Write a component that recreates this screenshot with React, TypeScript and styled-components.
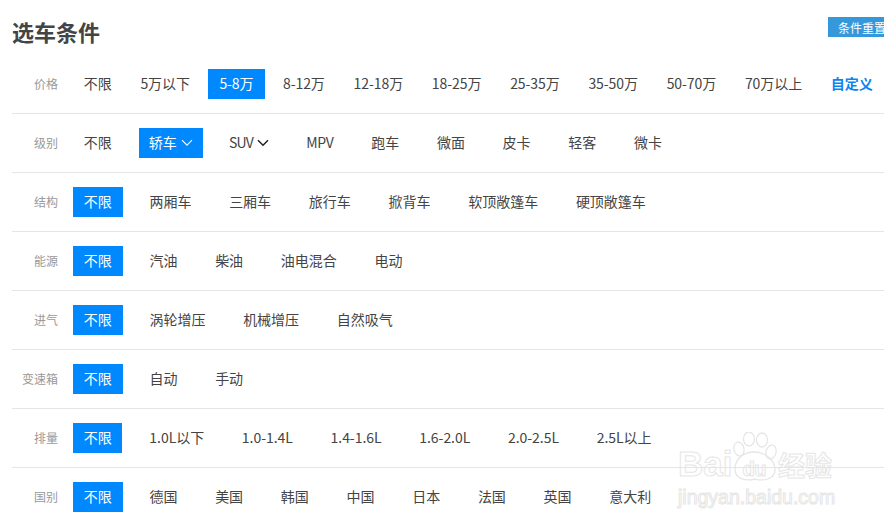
import React from "react";
import styled, { createGlobalStyle } from "styled-components";

const Global = createGlobalStyle`
  html, body { margin: 0; padding: 0; background: #fff; overflow: hidden; }
  body { font-family: "Noto Sans CJK SC", "Noto Sans", sans-serif; }
`;

const Page = styled.div`
  position: relative;
  width: 884px;
  height: 523px;
  overflow: hidden;
  padding-left: 12px;
  box-sizing: border-box;
`;

const Header = styled.header`
  display: flex;
  justify-content: space-between;
  align-items: flex-start;
  height: 55px;
  margin-right: -12px;
`;

const Title = styled.h1`
  margin: 15px 0 0;
  font-size: 22px;
  line-height: 32px;
  font-weight: 700;
  color: #444;
`;

const ResetButton = styled.button`
  margin: 17px 0 0;
  width: 68px;
  height: 20px;
  padding: 0;
  border: 0;
  background: #3498db;
  color: #fff;
  font: 12px/19px "Noto Sans CJK SC", sans-serif;
`;

const Row = styled.section<{ $last?: boolean }>`
  display: flex;
  align-items: center;
  height: 58px;
  border-bottom: ${(p) => (p.$last ? "0" : "1px solid #e5e5e5")};
`;

const Label = styled.span`
  flex: 0 0 46px;
  margin-right: 15px;
  text-align: right;
  font-size: 12px;
  line-height: 30px;
  color: #999;
`;

const Options = styled.div<{ $gap: number; $tight?: number }>`
  display: flex;
  align-items: center;
  gap: ${(p) => p.$gap}px;
  letter-spacing: ${(p) => p.$tight ?? 0}px;
`;

const Option = styled.a<{ $active?: boolean; $accent?: boolean; $pad?: number; $tight?: number }>`
  display: flex;
  align-items: center;
  gap: 2px;
  height: 30px;
  box-sizing: border-box;
  padding: 0 ${(p) => p.$pad ?? 10.75}px 2px;
  font-size: 14px;
  line-height: 28px;
  white-space: nowrap;
  ${(p) => (p.$tight !== undefined ? `letter-spacing: ${p.$tight}px;` : "")}
  color: ${(p) => (p.$active ? "#fff" : p.$accent ? "#0a84f0" : "#444")};
  background: ${(p) => (p.$active ? "#0088ff" : "transparent")};
  font-weight: ${(p) => (p.$accent ? 700 : 400)};
`;

const ChevronIcon = styled.svg`
  margin: 2px 0 0 2px;
`;

const Chevron = ({ color, weight }: { color: string; weight: number }) => (
  <ChevronIcon width="12" height="8" viewBox="0 0 12 8" fill="none">
    <path d="M1 1.2 L6 6.2 L11 1.2" stroke={color} strokeWidth={weight} />
  </ChevronIcon>
);

const Watermark = styled.div`
  position: absolute;
  left: 676px;
  top: 444px;
  display: flex;
  flex-direction: column;
  gap: 2px;
  width: 170px;
  padding-left: 2px;
  color: transparent;
  -webkit-text-stroke: 1px #e6e6e6;
  pointer-events: none;
`;

const MarkLine = styled.div`
  display: flex;
  align-items: baseline;
`;

const MarkBrand = styled.span`
  font: 700 35px/40px "Liberation Sans", sans-serif;
`;

const MarkDu = styled.span`
  margin-left: 10px;
  font: 700 20px/24px "Liberation Sans", sans-serif;
  letter-spacing: -0.5px;
`;

const MarkCn = styled.span`
  margin-left: 12px;
  font: 700 27px/34px "Noto Sans CJK SC", sans-serif;
`;

const MarkUrl = styled.span`
  font: 400 19.5px/22px "Liberation Sans", sans-serif;
  white-space: nowrap;
`;

const Paw = styled.svg`
  position: absolute;
  left: 56px;
  top: -12px;
`;

type Opt = {
  text: string;
  active?: boolean;
  accent?: boolean;
  chevron?: boolean;
  heavy?: boolean;
  pad?: number;
  tight?: number;
};
type RowData = { label: string; gap: number; tight?: number; options: Opt[] };

const t = (...xs: string[]): Opt[] => xs.map((text) => ({ text }));
const none: Opt = { text: "不限", active: true };

const rows: RowData[] = [
  {
    label: "价格",
    gap: 7.3,
    tight: -0.08,
    options: [
      { text: "不限" },
      { text: "5万以下" },
      { text: "5-8万", active: true, pad: 11.5 },
      ...t("8-12万", "12-18万", "18-25万", "25-35万", "35-50万", "50-70万", "70万以上"),
      { text: "自定义", accent: true },
    ],
  },
  {
    label: "级别",
    gap: 16.2,
    options: [
      { text: "不限" },
      { text: "轿车", active: true, chevron: true, pad: 10 },
      { text: "SUV", chevron: true, heavy: true, tight: -0.7, pad: 10 },
      { text: "MPV", tight: -0.3 },
      ...t("跑车", "微面", "皮卡", "轻客", "微卡"),
    ],
  },
  { label: "结构", gap: 16.2, options: [none, ...t("两厢车", "三厢车", "旅行车", "掀背车", "软顶敞篷车", "硬顶敞篷车")] },
  { label: "能源", gap: 16.2, options: [none, ...t("汽油", "柴油", "油电混合", "电动")] },
  { label: "进气", gap: 16.2, options: [none, ...t("涡轮增压", "机械增压", "自然吸气")] },
  { label: "变速箱", gap: 16.2, options: [none, ...t("自动", "手动")] },
  { label: "排量", gap: 16.2, tight: -0.04, options: [none, ...t("1.0L以下", "1.0-1.4L", "1.4-1.6L", "1.6-2.0L", "2.0-2.5L", "2.5L以上")] },
  { label: "国别", gap: 16.2, options: [none, ...t("德国", "美国", "韩国", "中国", "日本", "法国", "英国", "意大利")] },
];

export default function App() {
  return (
    <Page>
      <Global />
      <Header>
        <Title>选车条件</Title>
        <ResetButton>条件重置</ResetButton>
      </Header>
      {rows.map((row, i) => (
        <Row key={row.label} $last={i === rows.length - 1}>
          <Label>{row.label}</Label>
          <Options $gap={row.gap} $tight={row.tight}>
            {row.options.map((o) => (
              <Option key={o.text} $active={o.active} $accent={o.accent} $pad={o.pad} $tight={o.tight}>
                {o.text}
                {o.chevron && <Chevron color={o.active ? "#fff" : "#222"} weight={o.heavy ? 1.5 : 1.1} />}
              </Option>
            ))}
          </Options>
        </Row>
      ))}
      <Watermark>
        <Paw width="46" height="50" viewBox="0 0 46 50" fill="none" stroke="#e6e6e6" strokeWidth="1.3">
          <ellipse cx="7" cy="17" rx="5" ry="7" transform="rotate(-15 7 17)" />
          <ellipse cx="17" cy="7" rx="5.5" ry="7" />
          <ellipse cx="30" cy="8" rx="5.5" ry="7" />
          <ellipse cx="39" cy="20" rx="5" ry="7" transform="rotate(15 39 20)" />
          <path d="M3 37 C3 26 12 20 22 20 C33 20 43 28 43 38 C43 48 30 49 23 47 C15 49 3 48 3 37 Z" />
        </Paw>
        <MarkLine>
          <MarkBrand>Bai</MarkBrand>
          <MarkDu>du</MarkDu>
          <MarkCn>经验</MarkCn>
        </MarkLine>
        <MarkUrl>jingyan.baidu.com</MarkUrl>
      </Watermark>
    </Page>
  );
}
